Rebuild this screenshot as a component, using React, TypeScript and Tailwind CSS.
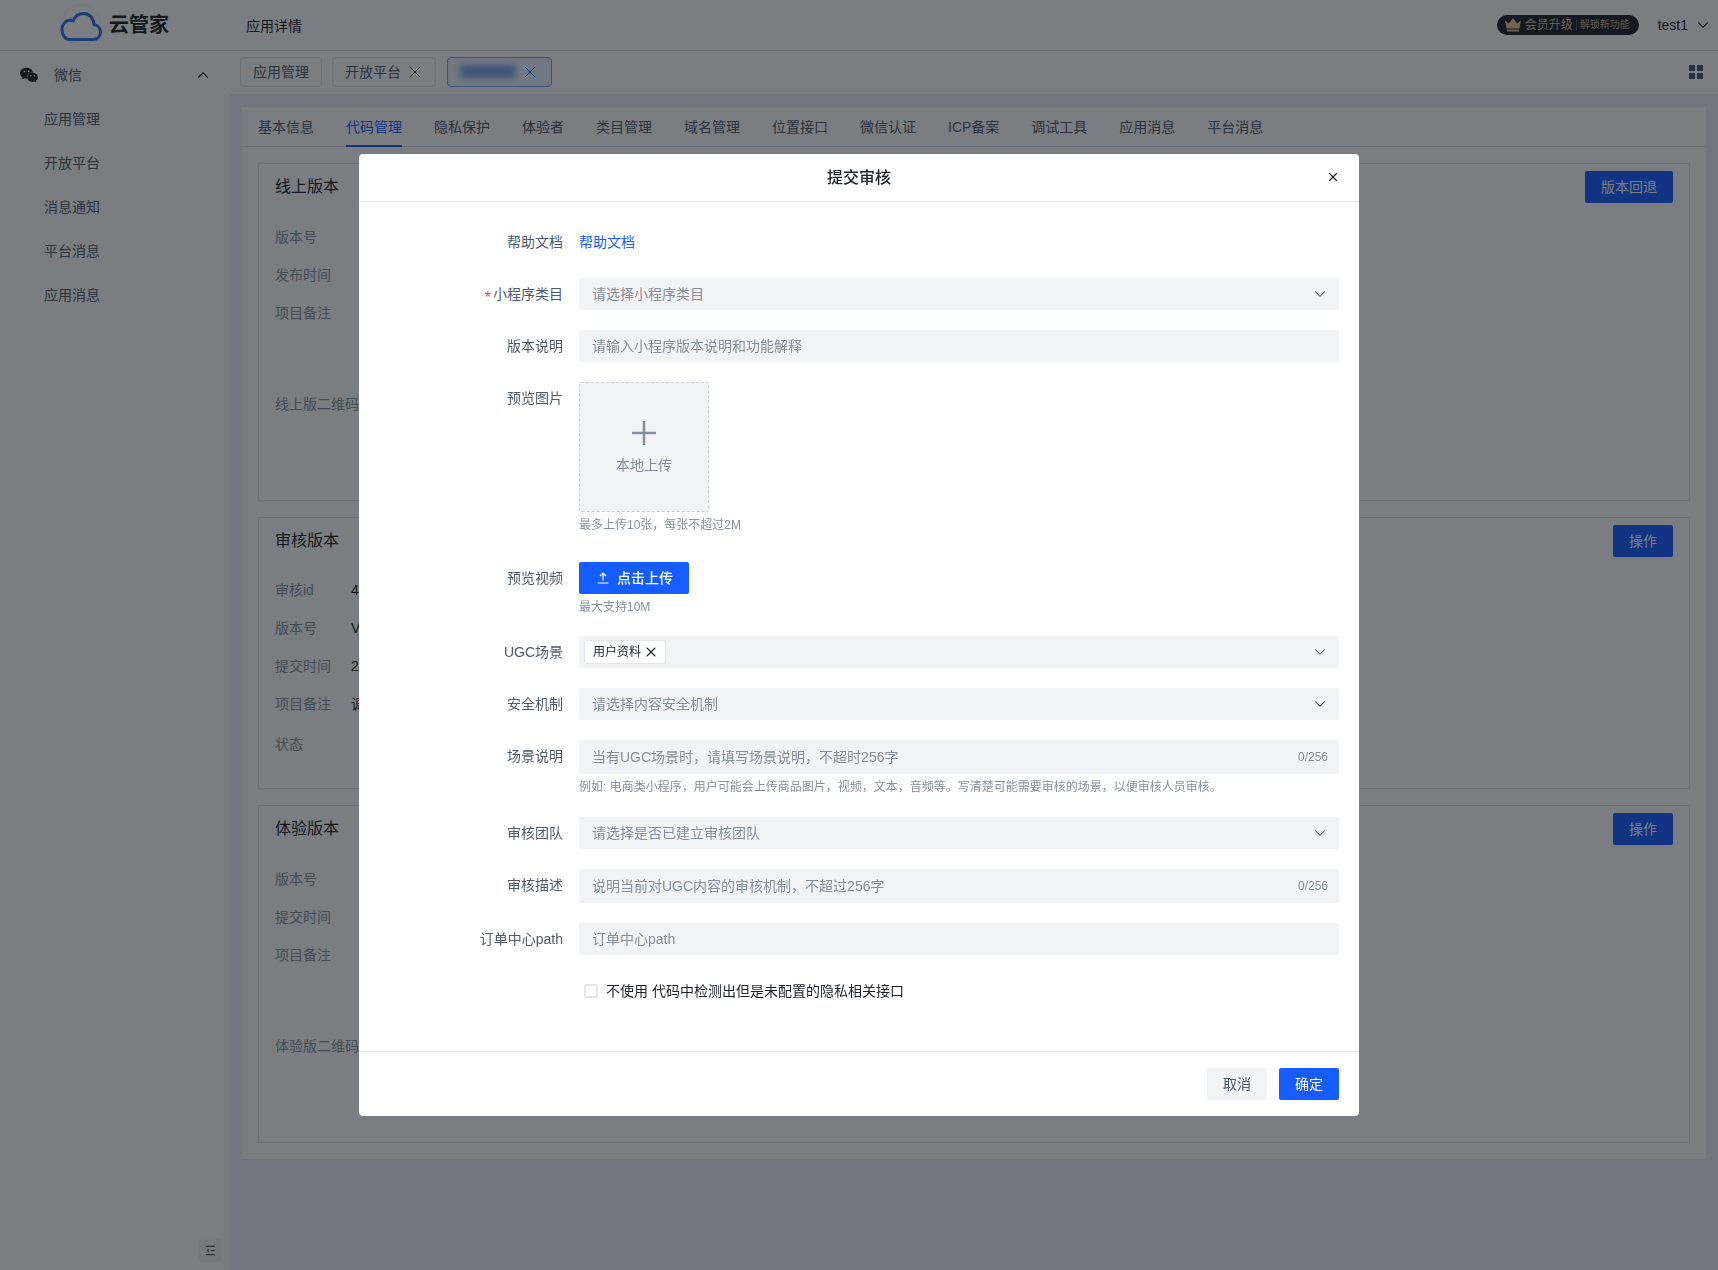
import React from 'react';
import { ChevronDown, ChevronUp, X } from 'lucide-react';
import { SiWechat } from 'react-icons/si';

const sideItems = ['应用管理', '开放平台', '消息通知', '平台消息', '应用消息'];
const tabs = ['基本信息', '代码管理', '隐私保护', '体验者', '类目管理', '域名管理', '位置接口', '微信认证', 'ICP备案', '调试工具', '应用消息', '平台消息'];

const CloudLogo = () => (
  <svg width="46" height="42" viewBox="0 0 46 42" fill="none">
    <circle cx="23" cy="21" r="20" stroke="#f2f3f5" strokeWidth="1" />
    <path
      d="M12 35.500h23c4.500 0 7.500-3.200 7.500-7.400 0-3.800-2.600-6.800-6.400-7.300C35.600 13.800 31 9.500 25.500 9.500c-5 0-8.700 3-10.300 7.500-1-.5-2-.7-3-.7C7.500 16.300 4 20.300 4 25.800c0 5.600 3.400 9.700 8 9.700z"
      stroke="#2f6fe8"
      strokeWidth="3"
      strokeLinejoin="round"
    />
  </svg>
);

const Crown = () => (
  <svg width="16" height="14" viewBox="0 0 16 14" className="shrink-0">
    <path d="M0 2.500l3.800 3L8 0l4.200 5.500 3.800-3-1.600 8H1.600z" fill="#e8c88a" />
    <rect x="2" y="11.500" width="12" height="2" fill="#e8c88a" />
  </svg>
);

const UploadIcon = () => (
  <svg width="12" height="12" viewBox="0 0 12 12" fill="none" stroke="#ffffff" strokeWidth="1.200">
    <path d="M6 1v7.500M3 4l3-3 3 3M.5 11h11" />
  </svg>
);

const CollapseIcon = () => (
  <svg width="11" height="11" viewBox="0 0 12 12" fill="none" stroke="#4e5969" strokeWidth="1.200">
    <path d="M1 1.500h10M6 6h5M1 10.500h10" />
    <path d="M4 3.800L1.500 6 4 8.200z" fill="#4e5969" stroke="none" />
  </svg>
);

const GridIcon = () => (
  <div className="grid grid-cols-2 gap-[2px]">
    <div className="h-[6px] w-[6px] bg-[#4e5969]" />
    <div className="h-[6px] w-[6px] bg-[#4e5969]" />
    <div className="h-[6px] w-[6px] bg-[#4e5969]" />
    <div className="h-[6px] w-[6px] bg-[#4e5969]" />
  </div>
);

const InfoRow = ({ label, value, className }: { label: string; value?: string; className?: string }) => (
  <div className={`flex h-[22px] items-center text-sm leading-[22px] ${className ?? ''}`}>
    <span className="w-[76px] shrink-0 whitespace-nowrap text-[#86909c]">{label}</span>
    {value && <span className="text-[#1d2129]">{value}</span>}
  </div>
);

const VersionCard = ({
  title,
  action,
  className,
  listClassName,
  children,
}: {
  title: string;
  action: string;
  className?: string;
  listClassName?: string;
  children: React.ReactNode;
}) => (
  <section className={`border border-[#e5e6eb] px-4 pt-[7px] ${className ?? ''}`}>
    <div className="flex h-8 items-center justify-between">
      <h3 className="text-base text-[#1d2129]">{title}</h3>
      <button className="h-8 rounded-[2px] bg-[#165dff] px-4 text-sm text-white">{action}</button>
    </div>
    <div className={`flex flex-col gap-4 ${listClassName ?? 'mt-[23px]'}`}>{children}</div>
  </section>
);

const FormRow = ({
  label,
  required,
  className,
  children,
}: {
  label: string;
  required?: boolean;
  className?: string;
  children: React.ReactNode;
}) => (
  <div className={`flex items-start ${className ?? 'mb-5'}`}>
    <div className="flex h-8 w-[204px] shrink-0 items-center justify-end text-sm text-[#4e5969]">
      {required && <span className="mr-[2px] mt-2 text-base leading-none text-[#f53f3f]">*</span>}
      {label}
    </div>
    <div className="ml-4 min-w-0 flex-1">{children}</div>
  </div>
);

const Field = ({
  placeholder,
  select,
  count,
}: {
  placeholder: string;
  select?: boolean;
  count?: boolean;
}) => (
  <div
    className={`flex items-center justify-between rounded-[2px] bg-[#f2f3f5] pl-[13px] text-sm text-[#86909c] ${
      count ? 'h-[34px] pr-[11px]' : 'h-8 pr-[10px]'
    }`}
  >
    <span>{placeholder}</span>
    {select && <ChevronDown size={18} strokeWidth={1.4} className="text-[#4e5969]" />}
    {count && <span className="text-xs">0/256</span>}
  </div>
);

const Hint = ({ children, className }: { children: React.ReactNode; className?: string }) => (
  <p className={`h-5 text-xs leading-5 text-[#86909c] ${className ?? ''}`}>{children}</p>
);

const SubmitModal = () => (
  <div className="fixed inset-0 flex justify-center bg-[rgba(13,18,26,0.55)] pt-[154px]">
    <div className="flex h-[962px] w-[1000px] flex-col rounded-[4px] bg-white">
      <div className="relative flex h-[48px] shrink-0 items-center justify-center border-b border-[#e5e6eb]">
        <span className="text-base font-medium text-[#1d2129]">提交审核</span>
        <X size={14} strokeWidth={2} className="absolute right-[19px] top-[16px] text-[#1d2129]" />
      </div>

      <div className="flex-1 pr-5 pt-6">
        <FormRow label="帮助文档">
          <div className="flex h-8 items-center text-sm text-[#165dff]">帮助文档</div>
        </FormRow>
        <FormRow label="小程序类目" required>
          <Field placeholder="请选择小程序类目" select />
        </FormRow>
        <FormRow label="版本说明">
          <Field placeholder="请输入小程序版本说明和功能解释" />
        </FormRow>
        <FormRow label="预览图片" className="mb-[27px]">
          <div className="flex h-[130px] w-[130px] flex-col items-center rounded-[2px] border border-dashed border-[#c9cdd4] bg-[#f2f3f5] pt-[38px]">
            <svg width="24" height="24" viewBox="0 0 24 24" stroke="#86909c" strokeWidth="2.500">
              <path d="M12 0v24M0 12h24" />
            </svg>
            <span className="mt-[10px] text-sm leading-5 text-[#86909c]">本地上传</span>
          </div>
          <Hint className="mt-[3px]">最多上传10张，每张不超过2M</Hint>
        </FormRow>
        <FormRow label="预览视频" className="mb-[19px]">
          <button className="flex h-8 w-[110px] items-center gap-2 rounded-[2px] bg-[#165dff] pl-[18px] text-sm font-medium text-white">
            <UploadIcon />
            点击上传
          </button>
          <Hint className="mt-[3px]">最大支持10M</Hint>
        </FormRow>
        <FormRow label="UGC场景">
          <div className="flex h-8 items-center justify-between rounded-[2px] bg-[#f2f3f5] pl-[5px] pr-[10px]">
            <span className="flex h-6 w-[82px] items-center rounded-[2px] border border-[#e5e6eb] bg-white pl-[8px] text-xs text-[#1d2129]">
              用户资料
              <X size={16} strokeWidth={1.6} className="ml-[2px]" />
            </span>
            <ChevronDown size={18} strokeWidth={1.4} className="text-[#4e5969]" />
          </div>
        </FormRow>
        <FormRow label="安全机制">
          <Field placeholder="请选择内容安全机制" select />
        </FormRow>
        <FormRow label="场景说明">
          <Field placeholder="当有UGC场景时，请填写场景说明，不超时256字" count />
          <Hint className="mt-[3px]">例如: 电商类小程序，用户可能会上传商品图片，视频，文本，音频等。写清楚可能需要审核的场景，以便审核人员审核。</Hint>
        </FormRow>
        <FormRow label="审核团队">
          <Field placeholder="请选择是否已建立审核团队" select />
        </FormRow>
        <FormRow label="审核描述">
          <Field placeholder="说明当前对UGC内容的审核机制，不超过256字" count />
        </FormRow>
        <FormRow label="订单中心path">
          <Field placeholder="订单中心path" />
        </FormRow>
        <div className="ml-[225px] flex h-8 items-center text-sm text-[#1d2129]">
          <span className="h-[14px] w-[14px] rounded-[2px] border-2 border-[#e5e6eb] bg-white" />
          <span className="ml-2">不使用 代码中检测出但是未配置的隐私相关接口</span>
        </div>
      </div>

      <div className="flex h-[65px] shrink-0 items-start justify-end gap-3 border-t border-[#e5e6eb] pr-5 pt-4">
        <button className="h-8 w-[60px] rounded-[2px] bg-[#f2f3f5] text-sm text-[#4e5969]">取消</button>
        <button className="h-8 w-[60px] rounded-[2px] bg-[#165dff] text-sm text-white">确定</button>
      </div>
    </div>
  </div>
);

export default function App() {
  return (
    <div className="relative h-[1270px] w-[1718px] overflow-hidden bg-white font-['Liberation_Sans','Noto_Sans_CJK_SC',sans-serif]">
      <header className="flex h-[51px] items-center border-b border-[#e5e6eb]">
        <div className="flex w-[246px] items-center pl-[58px]">
          <CloudLogo />
          <span className="ml-[5px] text-xl font-bold text-[#1d2129]">云管家</span>
        </div>
        <span className="mt-[2px] text-sm text-[#1d2129]">应用详情</span>
        <div className="ml-auto flex items-center">
          <div className="flex h-5 w-[142px] items-center whitespace-nowrap rounded-full bg-[#1d2129] pl-2 text-xs text-[#d9bf94]">
            <Crown />
            <span className="ml-1">会员升级</span>
            <span className="mx-[3px] h-[10px] w-px bg-[#4e5969]" />
            <span className="text-[10px] text-[#bfa987]">解锁新功能</span>
          </div>
          <span className="ml-[19px] text-sm text-[#1d2129]">test1</span>
          <ChevronDown size={18} strokeWidth={1.5} className="ml-[6px] mr-[6px] text-[#1d2129]" />
        </div>
      </header>

      <div className="flex h-[1219px]">
        <aside className="w-[230px] shrink-0 pt-[2px]">
          <div className="flex h-[44px] items-center pl-5 pr-[18px] text-sm text-[#4e5969]">
            <SiWechat size={18} className="text-[#1d2129]" />
            <span className="ml-4">微信</span>
            <ChevronUp size={18} strokeWidth={1.5} className="ml-auto text-[#1d2129]" />
          </div>
          {sideItems.map((item) => (
            <div key={item} className="flex h-[44px] items-center pl-[44px] text-sm text-[#4e5969]">
              {item}
            </div>
          ))}
          <div className="absolute left-[198px] top-[1238px] flex h-6 w-6 items-center justify-center rounded-[2px] bg-[#f7f8fa]">
            <CollapseIcon />
          </div>
        </aside>

        <main className="flex min-w-0 flex-1 flex-col">
          <div className="flex h-[43px] shrink-0 items-center gap-[10px] pb-[2px] pl-[10px] pr-[15px] text-sm text-[#4e5969]">
            <div className="flex h-[30px] items-center rounded-[4px] border border-[#e5e6eb] px-3">应用管理</div>
            <div className="flex h-[30px] w-[104px] items-center rounded-[4px] border border-[#e5e6eb] pl-3">
              开放平台
              <X size={20} strokeWidth={1.2} className="ml-[4px]" />
            </div>
            <div className="ml-px flex h-[30px] w-[105px] items-center rounded-[4px] border border-[#6aa1ff] bg-[#eef4ff] pl-3 text-[#165dff]">
              <span className="h-[13px] w-[56px] rounded-[3px] bg-[#7fa4e8] blur-[3px]" />
              <X size={20} strokeWidth={1.2} className="ml-[4px]" />
            </div>
            <div className="ml-auto">
              <GridIcon />
            </div>
          </div>

          <div className="flex-1 bg-[#edeef6] pb-[111px] pl-3 pr-3 pt-[13px]">
            <div className="h-[1052px] bg-white">
              <nav className="flex h-[40px] gap-8 border-b border-[#e5e6eb] pl-4 text-sm">
                {tabs.map((tab) => (
                  <div
                    key={tab}
                    className={
                      tab === '代码管理'
                        ? 'h-[40px] border-b-2 border-[#165dff] pt-[10px] text-[#165dff]'
                        : 'h-[40px] pt-[10px] text-[#4e5969]'
                    }
                  >
                    {tab}
                  </div>
                ))}
              </nav>
              <div className="px-4 pt-4">
                <VersionCard title="线上版本" action="版本回退" className="h-[338px]">
                  <InfoRow label="版本号" />
                  <InfoRow label="发布时间" />
                  <InfoRow label="项目备注" />
                  <InfoRow label="线上版二维码" className="mt-[53px]" />
                </VersionCard>
                <VersionCard title="审核版本" action="操作" className="mt-[16px] h-[272px]" listClassName="mt-[22px]">
                  <InfoRow label="审核id" value="4" />
                  <InfoRow label="版本号" value="V" />
                  <InfoRow label="提交时间" value="2" />
                  <InfoRow label="项目备注" value="调" />
                  <InfoRow label="状态" className="mt-[2px]" />
                </VersionCard>
                <VersionCard title="体验版本" action="操作" className="mt-[16px] h-[338px]">
                  <InfoRow label="版本号" />
                  <InfoRow label="提交时间" />
                  <InfoRow label="项目备注" />
                  <InfoRow label="体验版二维码" className="mt-[53px]" />
                </VersionCard>
              </div>
            </div>
          </div>
        </main>
      </div>

      <SubmitModal />
    </div>
  );
}
